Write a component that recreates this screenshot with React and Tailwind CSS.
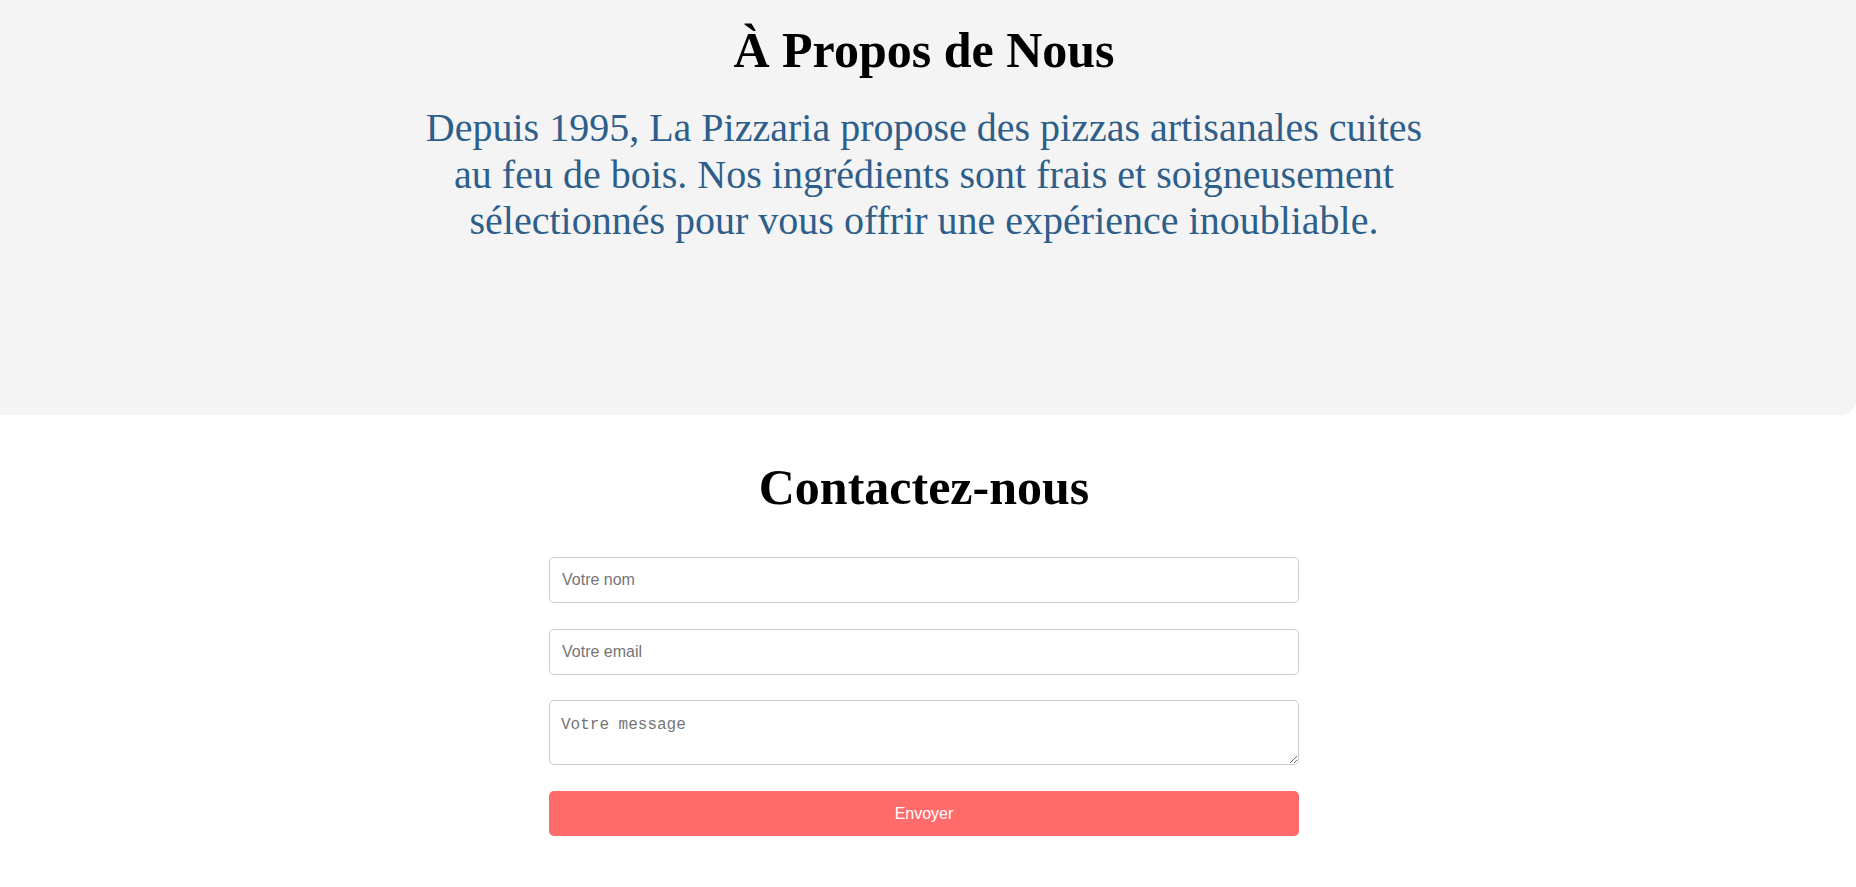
export default function App() {
  return (
    <div className="min-h-screen bg-white font-['Liberation_Serif',serif]">
      {/* A propos */}
      <section className="h-[415px] rounded-br-[15px] bg-[#f4f4f4] pt-[23px]">
        <div className="flex flex-col items-center pr-[8px] text-center">
          <h2 className="text-[50px] font-bold leading-[55px] text-black">
            À Propos de Nous
          </h2>
          <p className="mt-[27px] max-w-[1020px] text-[40px] leading-[46.5px] text-[#2e5e8a]">
            Depuis 1995, La Pizzaria propose des pizzas artisanales cuites au feu de bois. Nos ingrédients sont frais et soigneusement sélectionnés pour vous offrir une expérience inoubliable.
          </p>
        </div>
      </section>

      {/* Contact */}
      <section className="pt-[45px] pr-[8px]">
        <h2 className="text-center text-[50px] font-bold leading-[55px] text-black">
          Contactez-nous
        </h2>
        <form
          className="mx-auto mt-[42px] flex w-[750px] flex-col gap-[25.7px] font-['Liberation_Sans',Arial,sans-serif]"
          onSubmit={(e) => e.preventDefault()}
        >
          <input
            type="text"
            placeholder="Votre nom"
            className="h-[46px] w-full rounded-[5px] border border-[#cccccc] bg-white px-3 text-[16px] text-black outline-none placeholder:text-[#757575]"
          />
          <input
            type="email"
            placeholder="Votre email"
            className="h-[46px] w-full rounded-[5px] border border-[#cccccc] bg-white px-3 text-[16px] text-black outline-none placeholder:text-[#757575]"
          />
          <textarea
            placeholder="Votre message"
            className="block h-[65px] w-full rounded-[5px] border border-[#cccccc] bg-white px-[11px] pt-[12px] font-['Liberation_Mono',monospace] text-[16px] text-black outline-none placeholder:text-[#757575]"
          />
          <button
            type="submit"
            className="h-[45px] w-full rounded-[5px] bg-[#ff6b6b] text-[16px] text-white"
          >
            Envoyer
          </button>
        </form>
      </section>
    </div>
  );
}
